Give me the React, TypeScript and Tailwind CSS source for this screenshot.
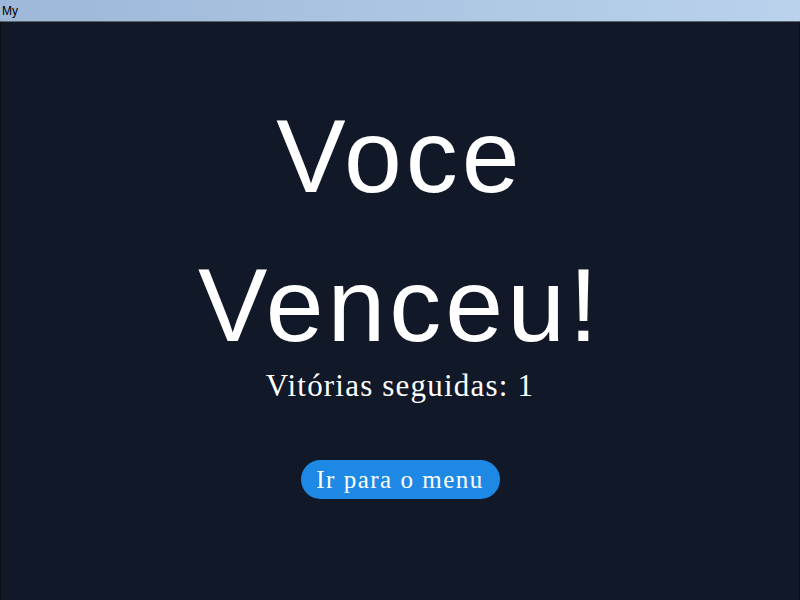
export default function App() {
  return (
    <div className="w-[800px] h-[600px] flex flex-col bg-[#111827] overflow-hidden">
      <div className="h-[22px] flex items-center px-[2px] bg-gradient-to-r from-[#9db8d8] to-[#bad2ec] border-b border-[#5f6368] shrink-0">
        <span className="text-[12px] text-black font-['Liberation_Sans',sans-serif] leading-none">My</span>
      </div>
      <div className="flex-1 flex flex-col items-center border-x border-[#0a0e16]">
        <h1 className="mt-[60px] text-center text-white text-[104px] leading-[149px] tracking-[4px] font-normal font-['Liberation_Sans',Arial,sans-serif]">
          Voce
          <br />
          Venceu!
        </h1>
        <p className="-mt-[12px] text-white text-[31px] leading-[36px] tracking-[1.2px] font-['Liberation_Serif',serif]">
          Vitórias seguidas: 1
        </p>
        <button className="mt-[56px] w-[199px] h-[39px] rounded-full bg-[#1e88e5] text-white text-[25px] leading-none tracking-[1.5px] font-['Liberation_Serif',serif]">
          Ir para o menu
        </button>
      </div>
    </div>
  );
}
